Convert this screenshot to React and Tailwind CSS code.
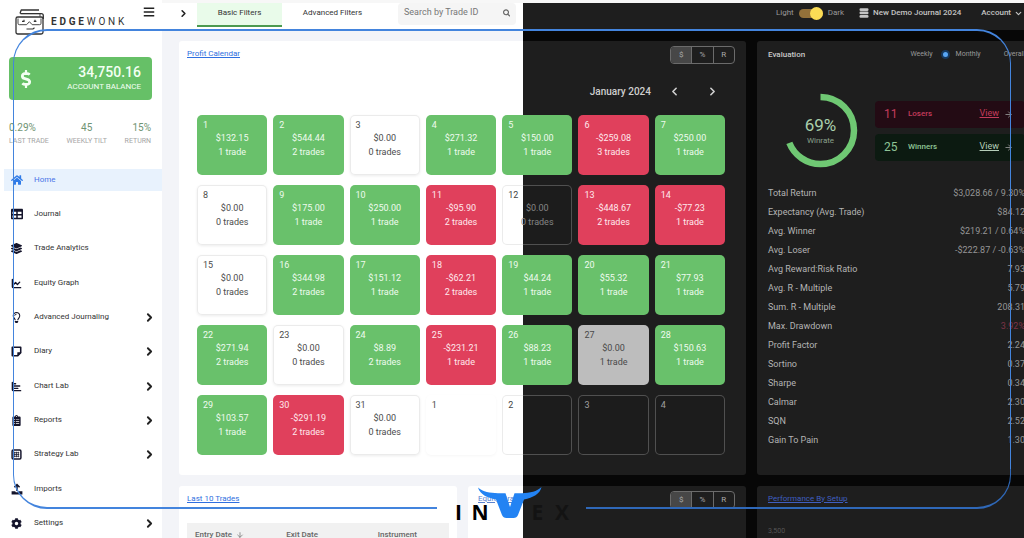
import React from "react";
import {
  FaHome, FaTable, FaLayerGroup, FaRegLightbulb, FaClipboardList,
  FaCog, FaSearch, FaBars, FaDollarSign,
} from "react-icons/fa";
import { ChartLine, ChartBar, ChevronRight, ChevronLeft, ChevronDown, ArrowRight, ArrowDown } from "lucide-react";

const SPLIT_CARD = "bg-[linear-gradient(90deg,#ffffff_51.1vw,#1e1e1e_51.1vw)] bg-fixed";
const EMPTY_CELL =
  "[background:linear-gradient(90deg,#ffffff_51.1vw,#1c1c1c_51.1vw)_fixed_padding-box,linear-gradient(90deg,#ebebeb_51.1vw,#505050_51.1vw)_fixed_border-box]";

function NoteIcon() {
  return (
    <svg viewBox="0 0 12 12" className="size-[11px]" fill="none" stroke="currentColor" strokeWidth="1.7" strokeLinejoin="round">
      <path d="M1.4 1.4h9.2v6l-3.2 3.2h-6z" />
      <path d="M10.6 7.2H7.2v3.4z" fill="currentColor" strokeWidth="0.6" />
    </svg>
  );
}

function StrategyIcon() {
  return (
    <svg viewBox="0 0 12 12" className="size-[11px]" fill="none" stroke="currentColor">
      <rect x="1.2" y="1.2" width="9.6" height="9.6" rx="1.2" strokeWidth="1.6" />
      <path d="M3 4h6M3 6h6M3 8h6M4 3v6M6 3v6M8 3v6" strokeWidth="0.8" />
    </svg>
  );
}

function ImportIcon() {
  return (
    <svg viewBox="0 0 12 12" className="size-3" fill="none" stroke="currentColor">
      <path d="M6 8V1.8M3.4 4.2 6 1.6l2.6 2.6" strokeWidth="1.5" />
      <path d="M0.6 8.2h3.6l.6 1h2.4l.6-1h3.6V11.4H.6z" fill="currentColor" stroke="none" />
    </svg>
  );
}

function DatabaseIcon() {
  return (
    <svg viewBox="0 0 10 10" className="size-[10px]" fill="currentColor">
      <rect x="0.5" y="0.2" width="9" height="2.7" rx="1.2" />
      <rect x="0.5" y="3.6" width="9" height="2.7" rx="1.2" />
      <rect x="0.5" y="7" width="9" height="2.7" rx="1.2" />
    </svg>
  );
}

const NAV = [
  [
    { label: "Home", icon: <FaHome className="size-3" />, active: true },
    { label: "Journal", icon: <FaTable className="size-3" /> },
    { label: "Trade Analytics", icon: <FaLayerGroup className="size-[11px]" /> },
  ],
  [
    { label: "Equity Graph", icon: <ChartLine strokeWidth={3} className="size-[11px]" /> },
    { label: "Advanced Journaling", icon: <FaRegLightbulb className="size-[11px]" />, more: true },
    { label: "Diary", icon: <NoteIcon />, more: true },
  ],
  [
    { label: "Chart Lab", icon: <ChartBar strokeWidth={3} className="size-[11px]" />, more: true },
    { label: "Reports", icon: <FaClipboardList className="size-[11px]" />, more: true },
    { label: "Strategy Lab", icon: <StrategyIcon />, more: true },
  ],
  [
    { label: "Imports", icon: <ImportIcon /> },
    { label: "Settings", icon: <FaCog className="size-[11px]" />, more: true },
  ],
];

const DAYS = [
  [1, "$132.15", "1 trade", "win"], [2, "$544.44", "2 trades", "win"], [3, "$0.00", "0 trades", "none"],
  [4, "$271.32", "1 trade", "win"], [5, "$150.00", "1 trade", "win"], [6, "-$259.08", "3 trades", "loss"],
  [7, "$250.00", "1 trade", "win"], [8, "$0.00", "0 trades", "none"], [9, "$175.00", "1 trade", "win"],
  [10, "$250.00", "1 trade", "win"], [11, "-$95.90", "2 trades", "loss"], [12, "$0.00", "0 trades", "split"],
  [13, "-$448.67", "2 trades", "loss"], [14, "-$77.23", "1 trade", "loss"], [15, "$0.00", "0 trades", "none"],
  [16, "$344.98", "2 trades", "win"], [17, "$151.12", "1 trade", "win"], [18, "-$62.21", "2 trades", "loss"],
  [19, "$44.24", "1 trade", "win"], [20, "$55.32", "1 trade", "win"], [21, "$77.93", "1 trade", "win"],
  [22, "$271.94", "2 trades", "win"], [23, "$0.00", "0 trades", "none"], [24, "$8.89", "2 trades", "win"],
  [25, "-$231.21", "1 trade", "loss"], [26, "$88.23", "1 trade", "win"], [27, "$0.00", "1 trade", "today"],
  [28, "$150.63", "1 trade", "win"], [29, "$103.57", "1 trade", "win"], [30, "-$291.19", "2 trades", "loss"],
  [31, "$0.00", "0 trades", "none"], [1, "", "", "blank"], [2, "", "", "split"], [3, "", "", "dark"], [4, "", "", "dark"],
];

const TONES = {
  win: "bg-[#69c16b] text-[#eefbee]",
  loss: "bg-[#e0405c] text-[#ffe9ed]",
  today: "bg-[#bdbdbd] text-[#4a4a4a]",
  none: `${EMPTY_CELL} text-[#4c4c4c] shadow-[0_1px_3px_rgba(0,0,0,0.08)]`,
  split: `${EMPTY_CELL} text-[#858585]`,
  blank: "bg-white text-[#4c4c4c] shadow-[0_1px_3px_rgba(0,0,0,0.04)]",
  dark: `${EMPTY_CELL} text-[#a0a0a0]`,
};

const METRICS = [
  ["Total Return", "$3,028.66 / 9.30%"], ["Expectancy (Avg. Trade)", "$84.12"], ["Avg. Winner", "$219.21 / 0.64%"],
  ["Avg. Loser", "-$222.87 / -0.63%"], ["Avg Reward:Risk Ratio", "7.93"], ["Avg. R - Multiple", "5.79"],
  ["Sum. R - Multiple", "208.31"], ["Max. Drawdown", "3.92%"], ["Profit Factor", "2.24"], ["Sortino", "0.37"],
  ["Sharpe", "0.34"], ["Calmar", "2.30"], ["SQN", "2.52"], ["Gain To Pain", "1.30"],
];

function EdgeLogo() {
  return (
    <div className="flex items-center gap-1.5 text-[#333]">
      <svg viewBox="0 0 30 26" className="h-[26px] w-[30px]" fill="none" stroke="currentColor" strokeWidth="1.3" strokeLinejoin="round">
        <path d="M5 4.5 6.2 1H24M5.5 4.6h20.8a2 2 0 0 1 2 2V10" />
        <path d="M5.5 4.6H25v3" strokeWidth="0.9" />
        <rect x="1" y="8" width="27" height="17" rx="1.8" />
        <path d="M3 9.5v4.8q0 1.4 1.4 1.4h7.2l2.8-3 2.8 3h7.4q1.4 0 1.4-1.4V9.5" strokeWidth="0.9" />
        <path d="M7 12.4h2.6M18.8 12.4h2.6M9 10.8v1.4M20 10.8v1.4M11.5 20h6.4l1.6-1.2" strokeWidth="1.1" />
      </svg>
      <span className="text-[10px] leading-[10px] tracking-[0.28em]"><b>EDGE</b>WONK</span>
    </div>
  );
}

function Sidebar() {
  return (
    <aside className="flex w-[162px] shrink-0 flex-col bg-white *:shrink-0">
      <div className="flex h-[30px] items-start justify-between pl-[15px] pr-[7px]">
        <div className="pt-[9px]"><EdgeLogo /></div>
        <button aria-label="Menu" className="pt-1.5 text-[#222]"><FaBars className="size-3" /></button>
      </div>
      <div className="mt-[27px] mr-[10px] ml-[9px] flex h-[43px] items-center justify-between rounded-sm bg-[#66c067] pr-[11px] pl-2 text-[#f3fff3]">
        <FaDollarSign className="size-[18px]" />
        <div className="text-right">
          <div className="text-[14px] leading-4 font-medium">34,750.16</div>
          <div className="text-[8px] leading-[14px]">ACCOUNT BALANCE</div>
        </div>
      </div>
      <dl className="mt-[21px] mr-[11px] ml-[9px] flex justify-between text-[7px] leading-3 text-[#a5a5a5]">
        {[["0.29%", "LAST TRADE", "text-left"], ["45", "WEEKLY TILT", "text-center"], ["15%", "RETURN", "text-right"]].map(([v, l, a]) => (
          <div key={l} className={`flex flex-col-reverse ${a}`}>
            <dt>{l}</dt>
            <dd className="text-[10px] leading-[14px] text-[#6f9473]">{v}</dd>
          </div>
        ))}
      </dl>
      <nav className="mt-[16px] flex flex-col gap-px pl-1 text-[8px] text-[#333]">
        {NAV.map((group, i) => (
          <ul key={i}>
            {group.map((n) => (
              <li key={n.label} className="flex h-[34px] items-center">
                <a href="#" className={`flex h-[22px] w-full items-center pr-1.5 pl-[7px] ${n.active ? "bg-[#e8f2fd] text-[#4a74e8]" : ""}`}>
                  <span className={`flex w-[23px] items-center ${n.active ? "text-[#2f7be8]" : "text-[#14142b]"}`}>{n.icon}</span>
                  {n.label}
                  {n.more && <ChevronRight strokeWidth={3.5} className="ml-auto size-[13px] text-[#222]" />}
                </a>
              </li>
            ))}
          </ul>
        ))}
      </nav>
    </aside>
  );
}

function Header() {
  return (
    <header className="flex h-[30px] shrink-0 items-start border-t-[3px] border-[#f7f7f7] bg-[linear-gradient(90deg,#ffffff_51.1vw,#1e1e1e_51.1vw)] bg-fixed text-[8px]">
      <div className="flex flex-1 items-start pl-4">
        <button aria-label="Expand" className="flex h-5 items-center text-[#222]"><ChevronRight strokeWidth={3.5} className="size-[11px]" /></button>
        <button className="ml-2 h-6 w-[85px] border-b-2 border-[#4c9a50] bg-[#e9fbea] pb-[3px] text-[#333]">Basic Filters</button>
        <button className="h-5 w-[101px] text-[#333]">Advanced Filters</button>
        <label className="ml-[15px] flex h-[22px] w-[118px] items-center rounded-sm bg-[#f5f5f5] px-1.5 pb-[3px] text-[#666]">
          <input aria-label="Search by Trade ID" placeholder="Search by Trade ID" className="w-full min-w-0 text-[9px] outline-none placeholder:text-[#777]" />
          <FaSearch className="size-2" />
        </label>
      </div>
      <div className="flex h-5 items-center text-[#c4c4c4]">
        <span className="text-[#999]">Light</span>
        <button role="switch" aria-checked="true" aria-label="Dark mode" className="mx-[5px] flex h-[13px] w-[24px] items-center">
          <span className="flex h-[9px] w-full items-center justify-end rounded-full bg-[#93713a]">
            <span className="size-[13px] shrink-0 rounded-full bg-[#fbdc55]" />
          </span>
        </button>
        <span className="text-[#999]">Dark</span>
        <button className="ml-[15px] flex items-center gap-1 font-medium"><DatabaseIcon />New Demo Journal 2024</button>
        <button className="ml-5 flex items-center gap-[3px] pr-px font-medium">Account<ChevronDown strokeWidth={3} className="size-[9px]" /></button>
      </div>
    </header>
  );
}

function UnitSwitch() {
  return (
    <div className="flex h-[18px] w-[65px] divide-x divide-[#6b6b6b] overflow-hidden rounded-sm border border-[#6b6b6b] text-[8px] text-[#aaa]">
      <button className="flex-1 bg-[#474747]">$</button>
      <button className="flex-1">%</button>
      <button className="flex-1">R</button>
    </div>
  );
}

function ProfitCalendar() {
  return (
    <section className={`rounded-[3px] pr-[11px] pb-5 pl-2 ${SPLIT_CARD}`}>
      <div className="flex items-start justify-between pt-[5px]">
        <a href="#" className="text-[8px] leading-4 text-[#2f6fe0] underline">Profit Calendar</a>
        <UnitSwitch />
      </div>
      <div className="mt-[17px] flex h-5 items-center justify-end pr-4 text-[#cfcfcf]">
        <h2 className="mr-[17px] text-[10px] font-medium">January 2024</h2>
        <button aria-label="Previous month" className="mr-[25px]"><ChevronLeft strokeWidth={3} className="size-[13px]" /></button>
        <button aria-label="Next month"><ChevronRight strokeWidth={3} className="size-[13px]" /></button>
      </div>
      <div className="mt-[14px] mr-2.5 ml-2.5 grid grid-cols-7 gap-x-1.5 gap-y-2.5">
        {DAYS.map(([d, amount, trades, tone], i) => (
          <div key={i} className={`h-[60px] rounded-[5px] border border-transparent text-center text-[9px] leading-[14px] ${TONES[tone]}`}>
            <div className={`px-[5px] pt-[3px] text-left leading-3 ${tone === "split" ? "text-[#444]" : ""}`}>{d}</div>
            <div>{amount}</div>
            <div>{trades}</div>
          </div>
        ))}
      </div>
    </section>
  );
}

function PeriodOption({ label, checked }) {
  return (
    <label className="flex items-center gap-1.5">
      <input
        type="radio"
        name="period"
        defaultChecked={checked}
        className="size-[9px] appearance-none rounded-full border-2 border-transparent checked:border-[#16395f] checked:bg-[#58a6f5]"
      />
      {label}
    </label>
  );
}

function Evaluation() {
  return (
    <section className="rounded-[3px] bg-[#1e1e1e] px-[11px] text-[#b4b4b4]">
      <div className="flex h-[27px] items-center justify-between text-[8px]">
        <h2 className="font-medium text-[#c8c8c8]">Evaluation</h2>
        <div className="flex gap-2 text-[7px] text-[#999]">
          <PeriodOption label="Weekly" />
          <PeriodOption label="Monthly" checked />
          <PeriodOption label="Overall" />
        </div>
      </div>
      <div className="mt-[25px] flex items-center">
        <div className="ml-[15px] grid size-[75px] shrink-0 place-items-center *:col-start-1 *:row-start-1">
          <svg viewBox="0 0 75 75" className="size-full -rotate-90" fill="none">
            <circle cx="37.5" cy="37.5" r="33.5" stroke="#6fc873" strokeWidth="6.5" pathLength="100" strokeDasharray="69 31" />
          </svg>
          <div className="text-center">
            <div className="text-[17px] leading-5 text-[#a9cfac]">69%</div>
            <div className="text-[8px] leading-3 text-[#8aa08c]">Winrate</div>
          </div>
        </div>
        <div className="ml-[17px] flex flex-1 flex-col gap-1.5 text-[8px]">
          {[["11", "Losers", "bg-[#230b14] text-[#c43c5c]", "text-[#c43c5c]"], ["25", "Winners", "bg-[#0c1a11] text-[#8fc496]", "text-[#b5cdb8]"]].map(([n, l, c, link]) => (
            <div key={l} className={`flex h-[27px] items-center rounded-sm pr-3 pl-[9px] ${c}`}>
              <span className="w-6 text-[12px]">{n}</span>
              <span className="flex-1 font-medium">{l}</span>
              <a href="#" className={`flex items-center gap-[5px] text-[9px] ${link}`}>
                <span className="underline">View</span><ArrowRight strokeWidth={2.5} className="size-[9px] text-[#8a8a8a]" />
              </a>
            </div>
          ))}
        </div>
      </div>
      <table className="mt-[16px] mb-[23px] w-full text-[9px]">
        <tbody>
          {METRICS.map(([k, v]) => (
            <tr key={k} className="h-[19px]">
              <th className="p-0 text-left font-normal">{k}</th>
              <td className={`p-0 text-right ${k === "Max. Drawdown" ? "text-[#7d3347]" : "text-[#959595]"}`}>{v}</td>
            </tr>
          ))}
        </tbody>
      </table>
    </section>
  );
}

function LastTrades() {
  return (
    <section className="rounded-[3px] bg-white px-2 pt-[5px]">
      <a href="#" className="block text-[8px] leading-4 text-[#2f6fe0] underline">Last 10 Trades</a>
      <table className="mt-4 w-full table-fixed bg-[#f1f1f1] text-[8px] text-[#666]">
        <thead>
          <tr className="h-6 text-left">
            <th className="p-0 pl-2 font-medium"><span className="flex items-center gap-1">Entry Date <ArrowDown className="size-2" /></span></th>
            <th className="p-0 pl-3 font-medium">Exit Date</th>
            <th className="p-0 pl-4 font-medium">Instrument</th>
          </tr>
        </thead>
      </table>
    </section>
  );
}

function Frame() {
  return (
    <div className="pointer-events-none absolute inset-x-[13px] top-[29px] bottom-[29px] flex flex-col">
      <div className="flex-1 rounded-t-[34px] border-x border-t-2 border-[#4384dd]" />
      <div className="flex h-10 justify-between">
        <div className="w-[42.5%] rounded-bl-[34px] border-b-2 border-l border-[#4384dd]" />
        <div className="w-[42.6%] rounded-br-[34px] border-r border-b-2 border-[#2f68b8]" />
      </div>
    </div>
  );
}

function InvexLogo() {
  return (
    <div className="pointer-events-none absolute inset-x-0 bottom-4 flex justify-center font-['Open_Sans',sans-serif] text-[21px] leading-5 font-bold text-black">
      <div className="flex w-[114px] items-end">
        <span className="w-[17px]">I</span>
        <span className="w-[17px]">N</span>
        <svg viewBox="0 0 64 31" className="mb-1 -mr-2.5 -ml-[11px] h-[31px] w-16 shrink-0" fill="#2383f3">
          <path d="M0 .5C5 5 12 6 20 6.2h7.5L32 20l4.500-13.800H44C52 6 59 4.500 63.500 0 62 7 55 10.500 46 12.500L40 28q-1.200 3-4.500 3h-7q-3.300 0-4.500-3L18 12.500C9 10.500 2 7.500 0 .5z" />
        </svg>
        <span className="w-6 text-[#131313]">E</span>
        <span className="text-[#131313]">X</span>
      </div>
    </div>
  );
}

export default function App() {
  return (
    <div className="relative flex h-screen overflow-hidden bg-white font-[Roboto,sans-serif]">
      <Sidebar />
      <div className="flex min-w-0 flex-1 flex-col">
        <Header />
        <main className="flex-1 bg-[linear-gradient(90deg,#f3f4f8_51.1vw,#070707_51.1vw)] bg-fixed pt-[11px] pl-[17px]">
          <div className="-mr-3 grid grid-cols-[minmax(0,1fr)_279px] gap-[11px]">
            <ProfitCalendar />
            <Evaluation />
            <div className="grid h-[60px] grid-cols-2 gap-[11px]">
              <LastTrades />
              <section className={`flex items-start justify-between rounded-[3px] pt-[5px] pr-[11px] pl-2.5 ${SPLIT_CARD}`}>
                <a href="#" className="text-[8px] leading-4 text-[#5b83cf] underline">Equity Graph</a>
                <UnitSwitch />
              </section>
            </div>
            <section className="rounded-[3px] bg-[#1e1e1e] px-[11px] pt-[5px]">
              <a href="#" className="block text-[8px] leading-4 text-[#3f5fc0] underline">Performance By Setup</a>
              <div className="mt-[18px] text-[7px] leading-3 text-[#555]">3,500</div>
            </section>
          </div>
        </main>
      </div>
      <Frame />
      <InvexLogo />
    </div>
  );
}
